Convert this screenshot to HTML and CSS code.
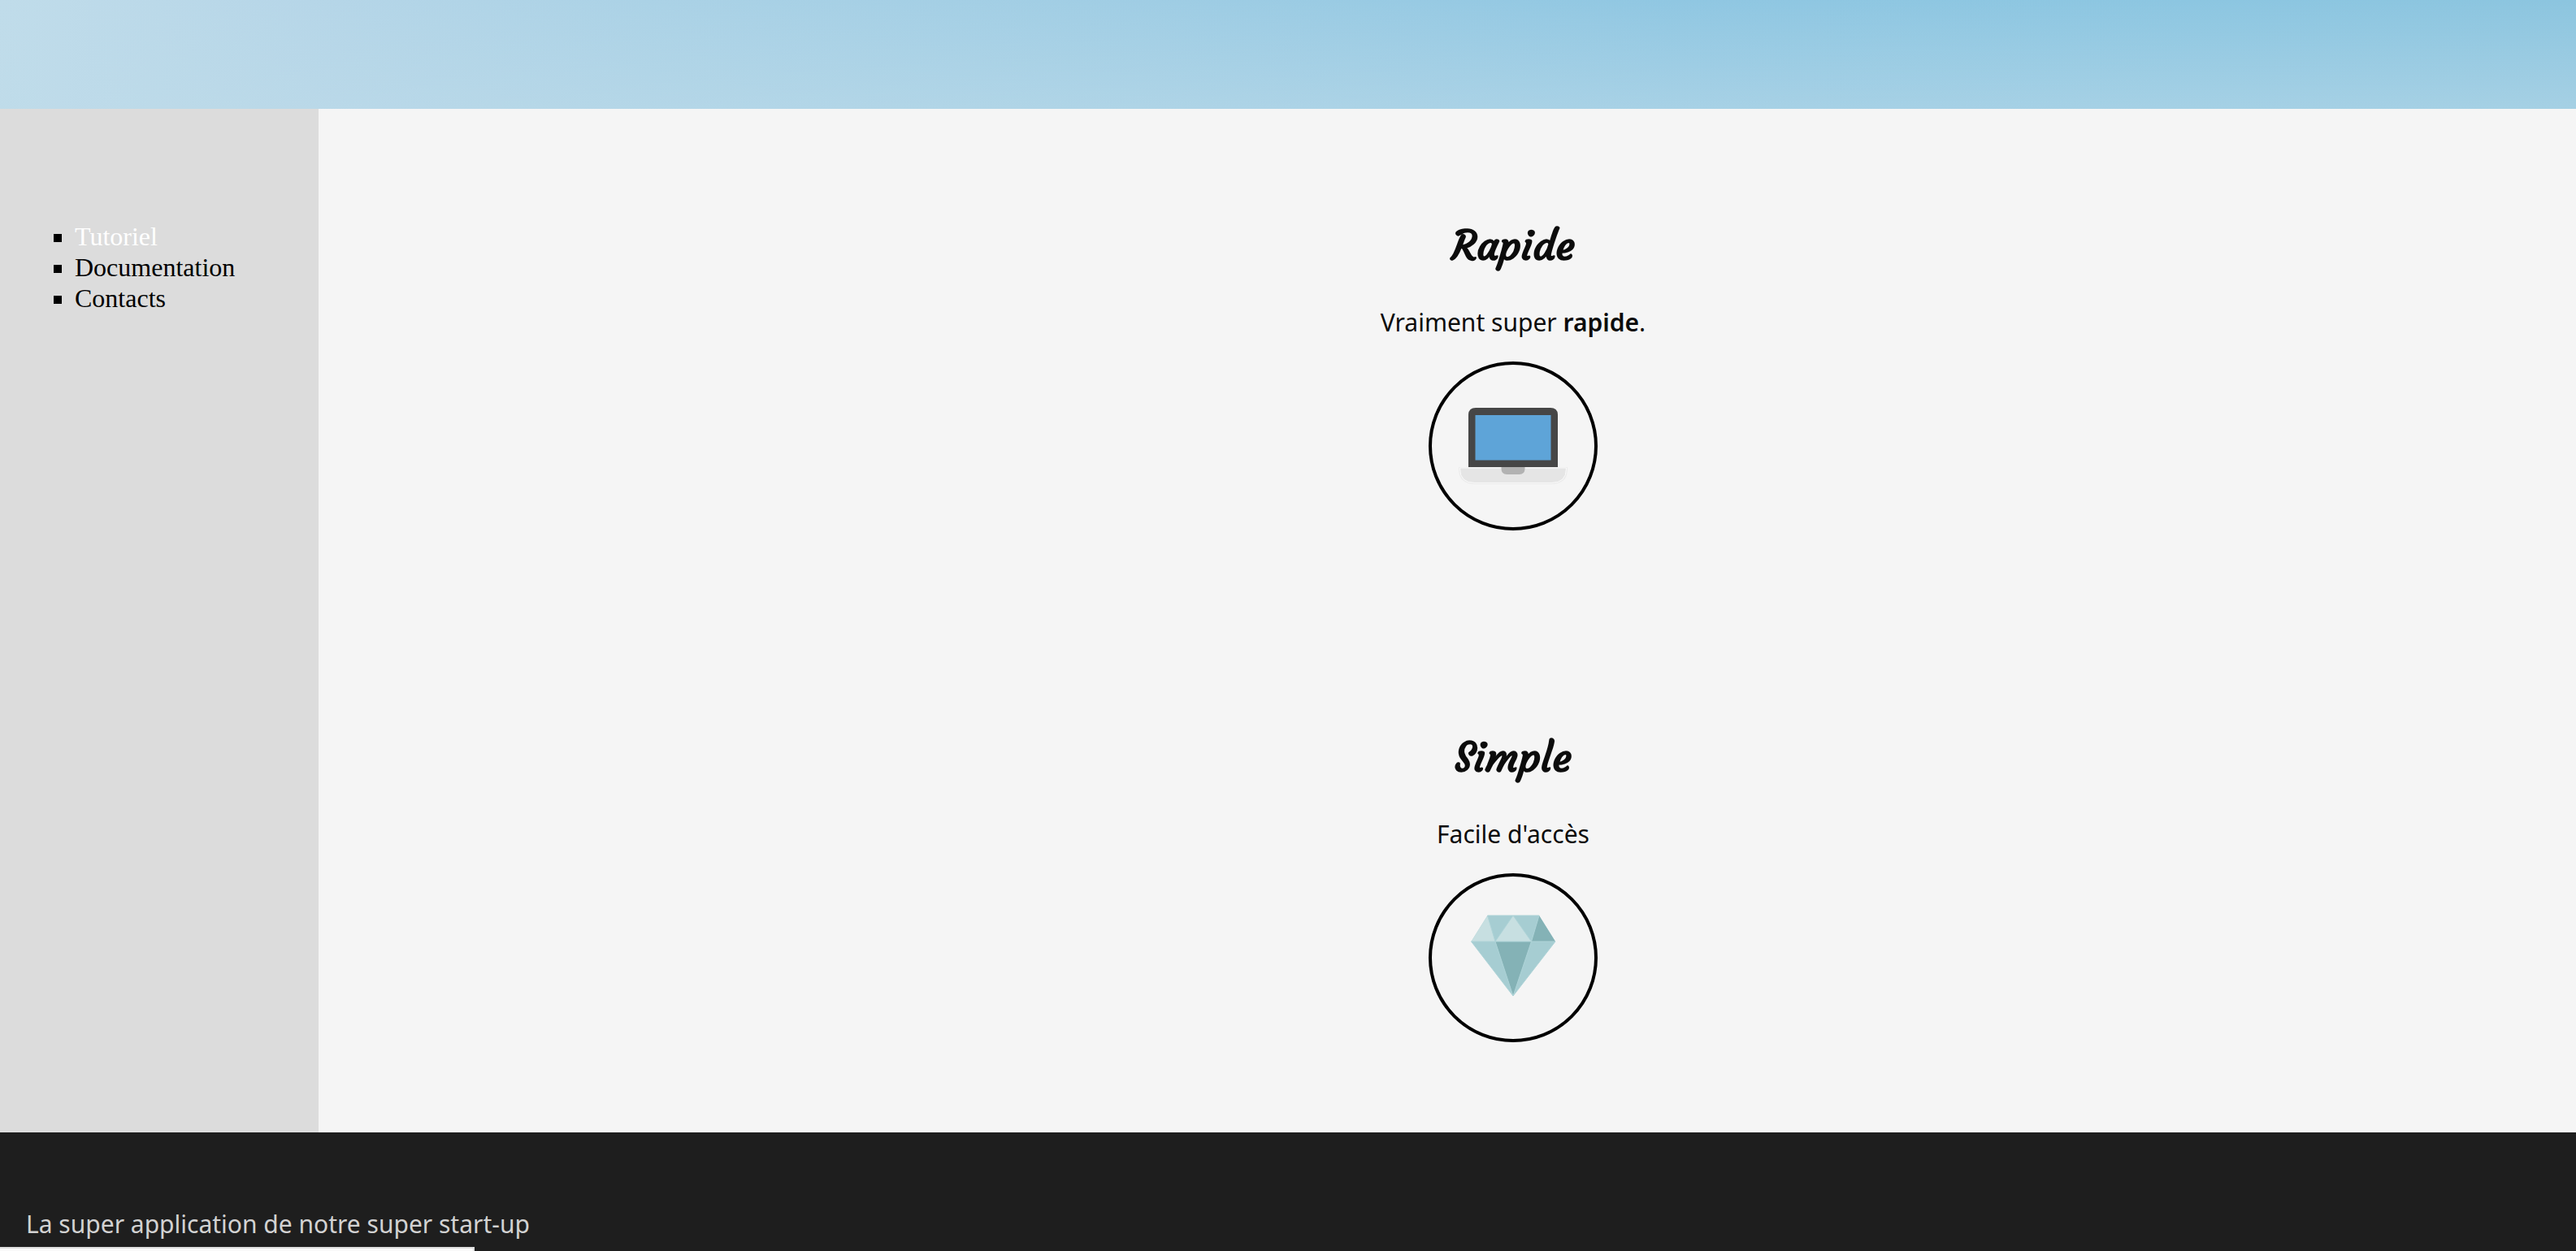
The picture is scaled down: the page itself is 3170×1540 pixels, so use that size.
FILE: index.html
```html
<!DOCTYPE html>
<html lang="fr">
<head>
<meta charset="utf-8">
<title>Super application</title>
<link rel="stylesheet" href="styles.css">
</head>
<body>
<header class="banner"></header>
<div class="layout">
  <nav class="sidebar">
    <ul class="menu">
      <li><a class="menu-link active" href="#">Tutoriel</a></li>
      <li><a class="menu-link" href="#">Documentation</a></li>
      <li><a class="menu-link" href="#">Contacts</a></li>
    </ul>
  </nav>
  <main class="content">
    <section class="feature">
      <h2 class="feature-title">Rapide</h2>
      <p class="feature-text">Vraiment super <strong>rapide</strong>.</p>
      <svg class="feature-icon" viewBox="0 0 200 200" aria-hidden="true">
        <path d="M33 126h134v2q0 19-20 19H53q-20 0-20-19z" fill="#ebebeb"/>
        <path d="M34.500 127h131v1q0 17.500-18.500 17.500H53q-18.500 0-18.500-17.500z" fill="#e5e5e5" stroke="#fafafa"/>
        <path d="M45 126V62q0-9 9-9h92q9 0 9 9v64z" fill="#464646"/>
        <path d="M53.500 62h93v55.500h-93z" fill="#5ea4d8"/>
        <path d="M85.500 126h29v2q0 7-7 7h-15q-7 0-7-7z" fill="#b2b2b2"/>
      </svg>
    </section>
    <section class="feature">
      <h2 class="feature-title">Simple</h2>
      <p class="feature-text">Facile d'accès</p>
      <svg class="feature-icon" viewBox="0 0 200 200" aria-hidden="true">
        <path d="M68.500 48h63.500l20 32-52 67-51.500-67z" fill="#a6cdd2"/>
        <path d="M68.500 48l9.500 32H48.500zM100 48l22.500 32H78z" fill="#c7dfe1"/>
        <path d="M132 48l20 32h-29.500zM78 80h44.500L100 147z" fill="#84b2b6"/>
        <path d="M48.500 80H152M68.500 48H132M68.500 48L78 80l22-32 22.500 32L132 48M78 80l22 67 22.500-67M48.500 80L100 147l52-67" fill="none" stroke="#aed3d7" stroke-width="1"/>
      </svg>
    </section>
  </main>
</div>
<footer class="footer">
  <p class="footer-text">La super application de notre super start-up</p>
</footer>
<div class="status-bar"></div>
</body>
</html>
```
FILE: styles.css
```css
* { box-sizing: border-box; }

body {
  margin: 0;
  min-height: 100vh;
  display: flex;
  flex-direction: column;
  background: #1e1e1e;
  font-family: "Noto Sans", sans-serif;
  font-size: 30px;
  color: #0c0c0c;
}

.banner {
  height: 134px;
  background:
    linear-gradient(to bottom, rgba(190, 223, 239, 0), rgba(190, 219, 233, 0.5)),
    linear-gradient(to right, #c0dcea 0%, #b6d6e8 12%, #abd2e6 25%, #9fcde4 45%, #90c7e2 65%, #8cc6e1 85%, #8cc5df 100%);
}

.layout { display: flex; }

.sidebar {
  flex: 0 0 392px;
  background: #dcdcdc;
  padding: 138px 12px 0;
  font-family: "Liberation Serif", serif;
  font-size: 32px;
  line-height: 38px;
}

.menu {
  margin: 0;
  padding: 0 0 0 80px;
  list-style: square;
  color: #000;
}

.menu-link { color: inherit; text-decoration: none; }
.menu-link.active { color: #fff; }

.content {
  flex: 1;
  padding-left: 162px;
  background: #f5f5f5;
}

.feature {
  display: flex;
  flex-direction: column;
  align-items: center;
  padding: 134px 0 111px;
}

.feature-title {
  margin: 0 0 33px;
  font-family: Courgette, Lato, sans-serif;
  font-size: 50px;
  font-weight: 700;
  line-height: 70px;
}

.feature-text { margin: 0 0 22px; line-height: 52px; }
.feature-text strong { font-weight: 600; }

.feature-icon {
  width: 208px;
  height: 208px;
  border: 4px solid #000;
  border-radius: 50%;
}

.footer {
  flex: 1;
  background: #1e1e1e;
  padding: 87px 32px 0;
  color: #d2d2d2;
}

.footer-text { margin: 0; line-height: 52px; }

.status-bar {
  position: fixed;
  left: 0;
  bottom: 0;
  width: 584px;
  height: 5px;
  background: #fafafa;
  border-top: 2px solid #dedede;
  border-right: 2px solid #dedede;
}
```
